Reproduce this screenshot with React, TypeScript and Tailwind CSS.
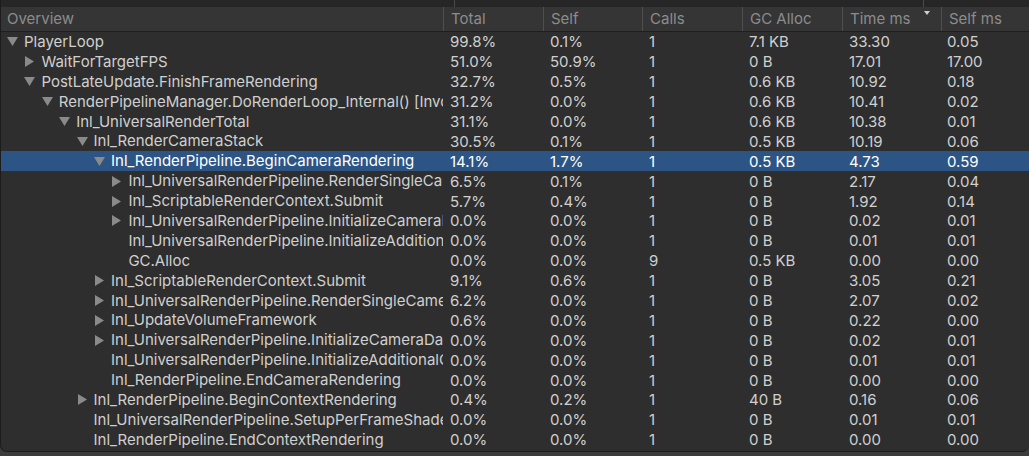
import React from 'react';

type Row = {
  name: string;
  level: number;
  arrow: 'down' | 'right' | null;
  total: string;
  self: string;
  calls: string;
  gc: string;
  time: string;
  selfMs: string;
  selected?: boolean;
};

const rows: Row[] = [
  { name: 'PlayerLoop', level: 0, arrow: 'down', total: '99.8%', self: '0.1%', calls: '1', gc: '7.1 KB', time: '33.30', selfMs: '0.05' },
  { name: 'WaitForTargetFPS', level: 1, arrow: 'right', total: '51.0%', self: '50.9%', calls: '1', gc: '0 B', time: '17.01', selfMs: '17.00' },
  { name: 'PostLateUpdate.FinishFrameRendering', level: 1, arrow: 'down', total: '32.7%', self: '0.5%', calls: '1', gc: '0.6 KB', time: '10.92', selfMs: '0.18' },
  { name: 'RenderPipelineManager.DoRenderLoop_Internal() [Invoke]', level: 2, arrow: 'down', total: '31.2%', self: '0.0%', calls: '1', gc: '0.6 KB', time: '10.41', selfMs: '0.02' },
  { name: 'Inl_UniversalRenderTotal', level: 3, arrow: 'down', total: '31.1%', self: '0.0%', calls: '1', gc: '0.6 KB', time: '10.38', selfMs: '0.01' },
  { name: 'Inl_RenderCameraStack', level: 4, arrow: 'down', total: '30.5%', self: '0.1%', calls: '1', gc: '0.5 KB', time: '10.19', selfMs: '0.06' },
  { name: 'Inl_RenderPipeline.BeginCameraRendering', level: 5, arrow: 'down', total: '14.1%', self: '1.7%', calls: '1', gc: '0.5 KB', time: '4.73', selfMs: '0.59', selected: true },
  { name: 'Inl_UniversalRenderPipeline.RenderSingleCamera', level: 6, arrow: 'right', total: '6.5%', self: '0.1%', calls: '1', gc: '0 B', time: '2.17', selfMs: '0.04' },
  { name: 'Inl_ScriptableRenderContext.Submit', level: 6, arrow: 'right', total: '5.7%', self: '0.4%', calls: '1', gc: '0 B', time: '1.92', selfMs: '0.14' },
  { name: 'Inl_UniversalRenderPipeline.InitializeCameraData', level: 6, arrow: 'right', total: '0.0%', self: '0.0%', calls: '1', gc: '0 B', time: '0.02', selfMs: '0.01' },
  { name: 'Inl_UniversalRenderPipeline.InitializeAdditionalCameraData', level: 6, arrow: null, total: '0.0%', self: '0.0%', calls: '1', gc: '0 B', time: '0.01', selfMs: '0.01' },
  { name: 'GC.Alloc', level: 6, arrow: null, total: '0.0%', self: '0.0%', calls: '9', gc: '0.5 KB', time: '0.00', selfMs: '0.00' },
  { name: 'Inl_ScriptableRenderContext.Submit', level: 5, arrow: 'right', total: '9.1%', self: '0.6%', calls: '1', gc: '0 B', time: '3.05', selfMs: '0.21' },
  { name: 'Inl_UniversalRenderPipeline.RenderSingleCamera', level: 5, arrow: 'right', total: '6.2%', self: '0.0%', calls: '1', gc: '0 B', time: '2.07', selfMs: '0.02' },
  { name: 'Inl_UpdateVolumeFramework', level: 5, arrow: 'right', total: '0.6%', self: '0.0%', calls: '1', gc: '0 B', time: '0.22', selfMs: '0.00' },
  { name: 'Inl_UniversalRenderPipeline.InitializeCameraData', level: 5, arrow: 'right', total: '0.0%', self: '0.0%', calls: '1', gc: '0 B', time: '0.02', selfMs: '0.01' },
  { name: 'Inl_UniversalRenderPipeline.InitializeAdditionalCameraData', level: 5, arrow: null, total: '0.0%', self: '0.0%', calls: '1', gc: '0 B', time: '0.01', selfMs: '0.01' },
  { name: 'Inl_RenderPipeline.EndCameraRendering', level: 5, arrow: null, total: '0.0%', self: '0.0%', calls: '1', gc: '0 B', time: '0.00', selfMs: '0.00' },
  { name: 'Inl_RenderPipeline.BeginContextRendering', level: 4, arrow: 'right', total: '0.4%', self: '0.2%', calls: '1', gc: '40 B', time: '0.16', selfMs: '0.06' },
  { name: 'Inl_UniversalRenderPipeline.SetupPerFrameShaderConstants', level: 4, arrow: null, total: '0.0%', self: '0.0%', calls: '1', gc: '0 B', time: '0.01', selfMs: '0.01' },
  { name: 'Inl_RenderPipeline.EndContextRendering', level: 4, arrow: null, total: '0.0%', self: '0.0%', calls: '1', gc: '0 B', time: '0.00', selfMs: '0.00' },
];

const cols = 'grid grid-cols-[442px_100px_99px_100px_100px_99px_1fr]';

const Arrow = ({ dir }: { dir: 'down' | 'right' | null }) => (
  <span className="w-[17px] h-full flex items-center shrink-0">
    {dir === 'down' && (
      <svg width="11" height="9" viewBox="0 0 11 9">
        <path d="M0 0 L11 0 L5.5 9 Z" fill="#8a8a8a" />
      </svg>
    )}
    {dir === 'right' && (
      <svg width="9" height="11" viewBox="0 0 9 11" className="ml-[1px]">
        <path d="M0 0 L9 5.5 L0 11 Z" fill="#8a8a8a" />
      </svg>
    )}
  </span>
);

const HeaderCell = ({ label, first, sorted }: { label: string; first?: boolean; sorted?: boolean }) => (
  <div className={`relative flex items-center h-full ${first ? 'pl-[6px]' : 'pl-[7px] border-l border-[#4f4f4f]'}`}>
    <span>{label}</span>
    {sorted && (
      <svg width="6" height="4" viewBox="0 0 6 4" className="absolute right-[11px] top-[4px]">
        <path d="M0 0 L6 0 L3 4 Z" fill="#cfcfcf" />
      </svg>
    )}
  </div>
);

export default function App() {
  return (
    <div
      className="w-[1029px] h-[456px] bg-[#3c3c3c] overflow-hidden text-[15px]"
      style={{ fontFamily: 'Inter, "Noto Sans", sans-serif' }}
    >
      <div className="h-[452px] bg-[#2e2e2e] rounded-b-[7px] border-l border-b border-[#1c1c1c] overflow-hidden flex flex-col">
        {/* toolbar edge */}
        <div className="h-[7px] bg-[#262626] relative shrink-0">
          <div className="absolute left-[453px] top-0 h-full w-px bg-[#4a4a4a]" />
          <div className="absolute left-[922px] top-0 h-full w-px bg-[#4a4a4a]" />
        </div>
        {/* header */}
        <div className={`${cols} h-[25px] bg-[#353535] border-b border-[#1e1e1e] text-[#8c8c8c] shrink-0`}>
          <HeaderCell label="Overview" first />
          <HeaderCell label="Total" />
          <HeaderCell label="Self" />
          <HeaderCell label="Calls" />
          <HeaderCell label="GC Alloc" />
          <HeaderCell label="Time ms" sorted />
          <HeaderCell label="Self ms" />
        </div>
        {/* rows */}
        <div className="flex flex-col">
          {rows.map((r, i) => (
            <div
              key={i}
              className={`${cols} h-[19.9px] items-center leading-none ${
                r.selected ? 'bg-[#2c5586] text-white' : 'text-[#d0d0d0]'
              }`}
            >
              <div
                className="flex items-center h-full min-w-0 overflow-hidden whitespace-nowrap"
                style={{ paddingLeft: 6 + r.level * 17.4 }}
              >
                <Arrow dir={r.arrow} />
                <span className="min-w-0 overflow-hidden leading-[20px]">{r.name}</span>
              </div>
              <div className="pl-[7px]">{r.total}</div>
              <div className="pl-[7px]">{r.self}</div>
              <div className="pl-[7px]">{r.calls}</div>
              <div className="pl-[7px]">{r.gc}</div>
              <div className="pl-[7px]">{r.time}</div>
              <div className="pl-[6px]">{r.selfMs}</div>
            </div>
          ))}
        </div>
      </div>
    </div>
  );
}
